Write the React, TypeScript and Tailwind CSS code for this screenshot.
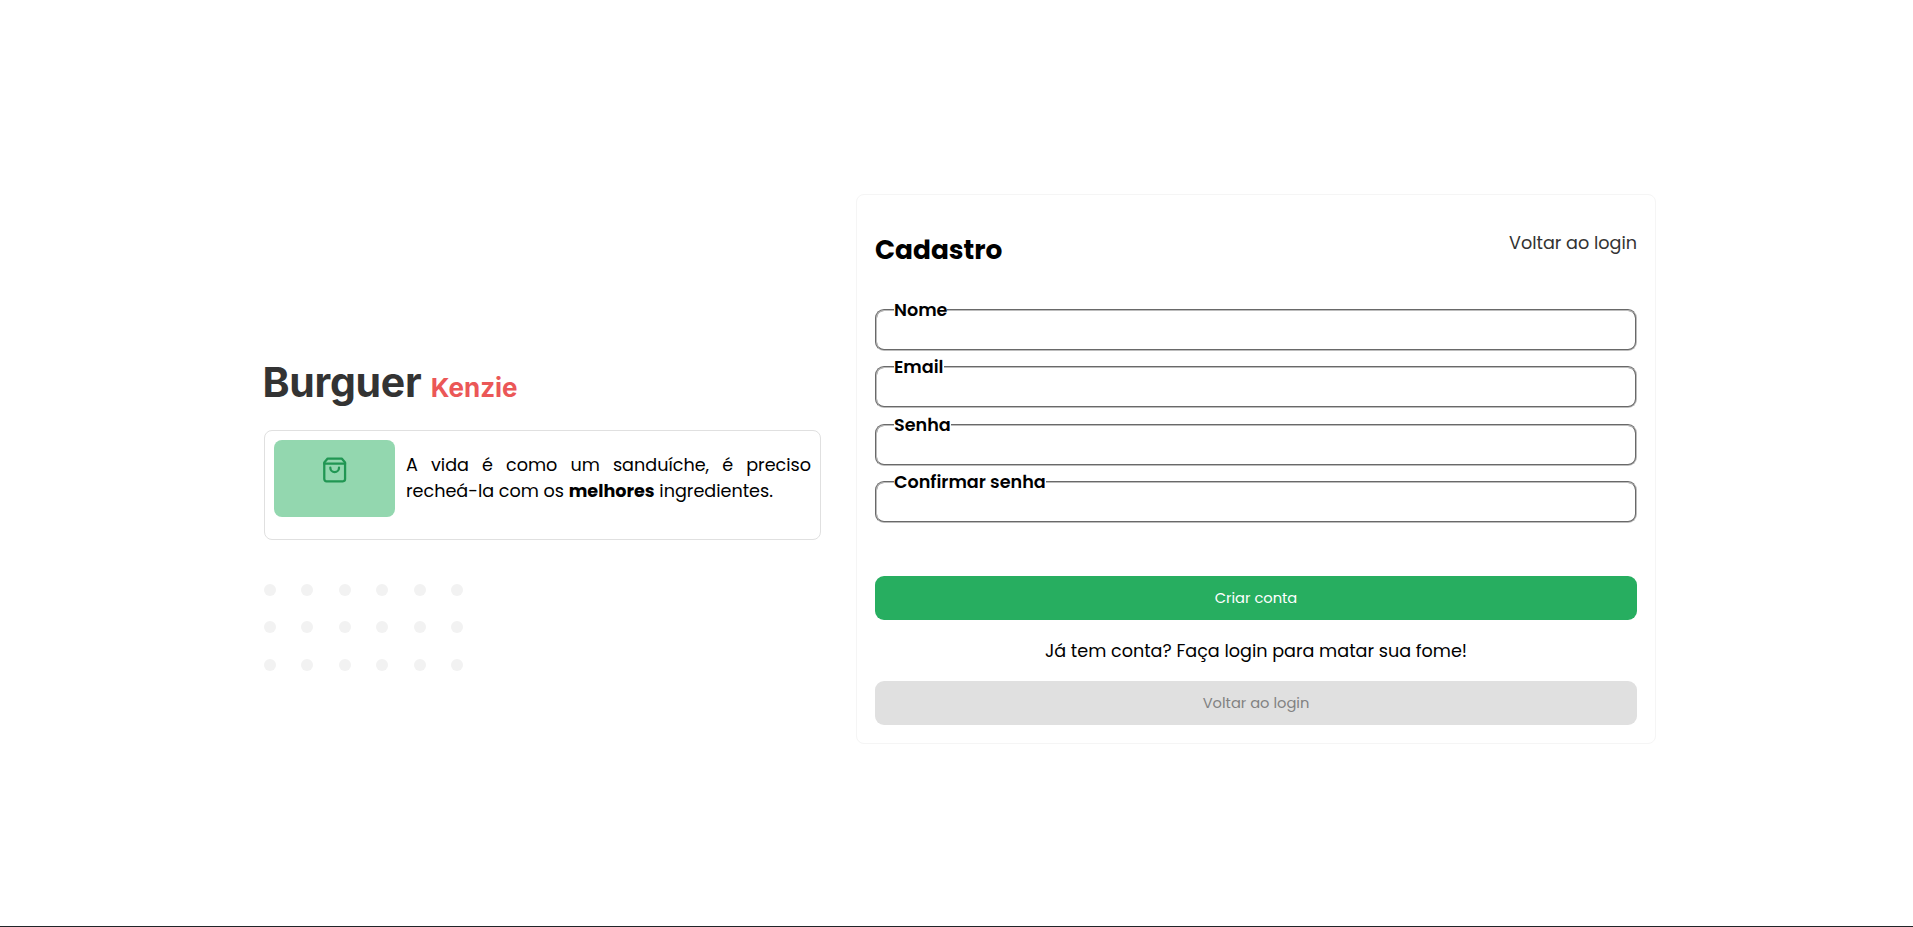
const fields = ["Nome", "Email", "Senha", "Confirmar senha"];

function BagIcon() {
  return (
    <svg
      className="h-[26px] w-[26px]"
      viewBox="0 0 24 24"
      fill="none"
      stroke="#219653"
      strokeWidth="2.1"
      strokeLinecap="round"
      strokeLinejoin="round"
    >
      <path d="M5.2 1.4h13L21.3 5V20.4a2 2 0 0 1-2 2H4.1a2 2 0 0 1-2-2V5z" />
      <path d="M2.1 6.2h19.2" />
      <path d="M15.7 9.9a4 4 0 0 1-8 0" />
    </svg>
  );
}

function Brand() {
  return (
    <section className="flex w-[557px] flex-col pt-[358px]">
      <h1 className="flex h-[49px] items-baseline font-['Inter',sans-serif] leading-[49px]">
        <span className="-ml-[1.5px] text-[41px] font-bold tracking-[-0.3px] text-[#333333]">Burguer</span>
        <span className="ml-[9.5px] text-[26px] font-bold tracking-[0px] text-[#eb5757]">Kenzie</span>
      </h1>
      <div className="mt-[23px] flex h-[110px] rounded-[8px] border border-[#e0e0e0] p-[9px]">
        <div className="flex h-[77px] w-[121px] shrink-0 justify-center rounded-[8px] bg-[#93d7af] pt-[16.6px]">
          <BagIcon />
        </div>
        <p className="ml-[11px] mt-3 w-[405px] text-justify text-[17.6px] leading-[26.4px]">
          A vida é como um sanduíche, é preciso recheá-la com os <strong className="font-bold">melhores</strong>{" "}
          ingredientes.
        </p>
      </div>
      <div className="mt-11 grid w-[199px] grid-cols-6 gap-x-[25.4px] gap-y-[25.4px]">
        {Array.from({ length: 18 }, (_, i) => (
          <span key={i} className="h-3 w-3 rounded-full bg-[#f2f2f2]" />
        ))}
      </div>
    </section>
  );
}

function RegisterForm() {
  return (
    <form className="mt-[194px] flex h-[550px] w-[800px] flex-col rounded-[8px] border border-[#f5f5f5] px-[18px]">
      <header className="flex h-[101.9px] items-start justify-between">
        <h2 className="mt-[35px] text-[26.4px] leading-10 font-bold">Cadastro</h2>
        <a href="#" className="mt-[35px] text-[17.6px] leading-[26.4px] text-[#333333]">
          Voltar ao login
        </a>
      </header>
      {fields.map((name) => (
        <fieldset
          key={name}
          className="mb-[3.4px] h-[54px] rounded-[9px] border-2 border-[#bdbdbd] px-[17px] [border-style:groove]"
        >
          <legend className="text-[17.6px] leading-[26.4px] font-semibold">{name}</legend>
          <input aria-label={name} className="block h-5 w-full bg-transparent outline-none" />
        </fieldset>
      ))}
      <button type="button" className="mt-[49.7px] h-11 rounded-[9px] bg-[#27ae60] text-[14.67px] text-white">
        Criar conta
      </button>
      <p className="mt-[18px] h-[26px] text-center text-[17.6px] leading-[26.4px]">
        Já tem conta? Faça login para matar sua fome!
      </p>
      <button type="button" className="mt-[17px] h-11 rounded-[9px] bg-[#e0e0e0] text-[14.67px] text-[#828282]">
        Voltar ao login
      </button>
    </form>
  );
}

export default function App() {
  return (
    <main className="flex h-[927px] gap-[35px] overflow-hidden border-b border-[#212529] bg-white pl-[264px] font-['Poppins','Inter',sans-serif] text-black">
      <Brand />
      <RegisterForm />
    </main>
  );
}
